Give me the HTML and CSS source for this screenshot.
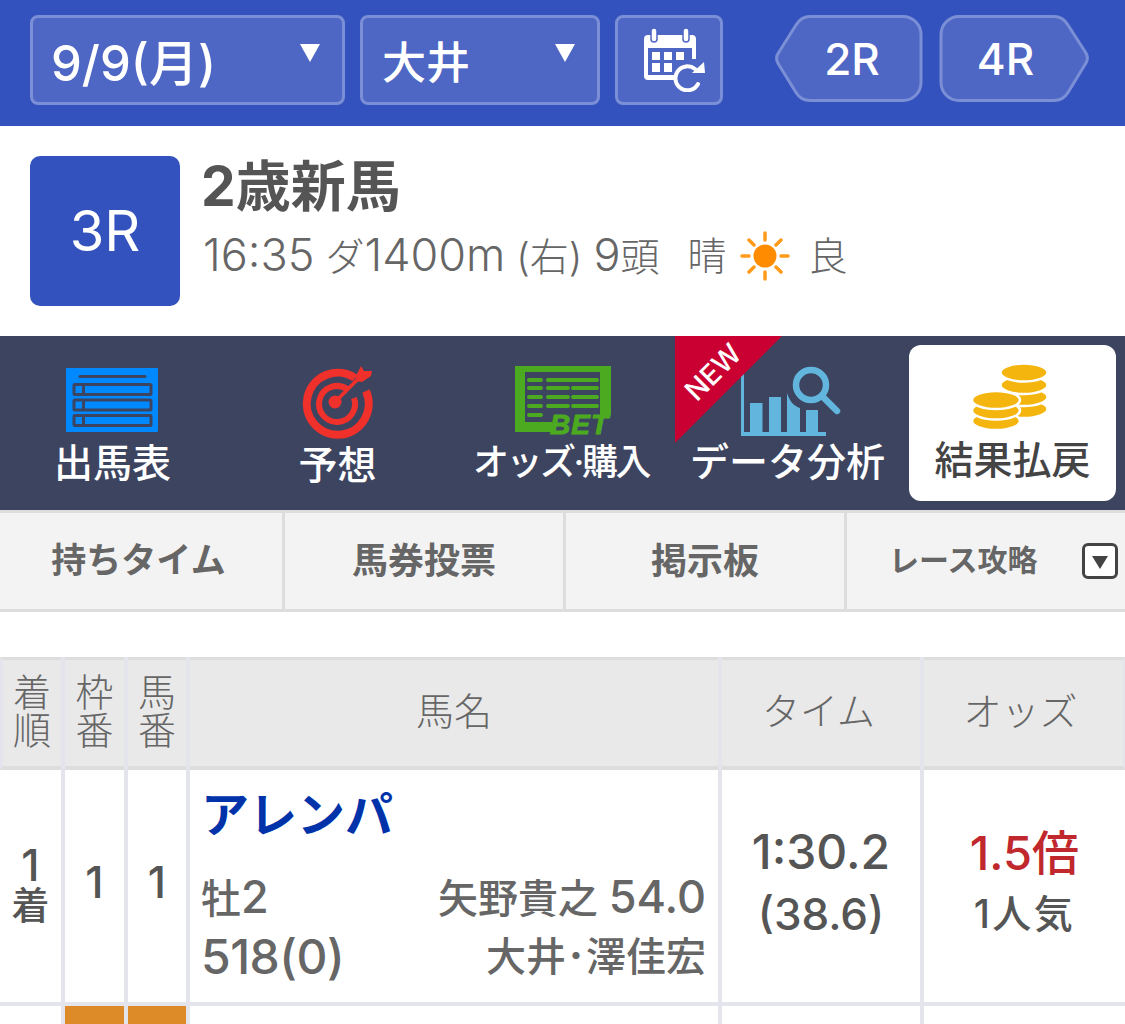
FILE: index.html
```html
<!DOCTYPE html>
<html lang="ja">
<head>
<meta charset="utf-8">
<title>3R 2歳新馬</title>
<link rel="stylesheet" href="styles.css">
</head>
<body>
<header class="topbar">
  <div class="box box-date"><span>9/9(月)</span><i class="caret"></i></div>
  <div class="box box-place"><span>大井</span><i class="caret"></i></div>
  <div class="box box-cal">
    <svg width="62" height="64" viewBox="0 0 62 64">
      <path fill="#fff" d="M4 7h44a4 4 0 0 1 4 4v20h-4V20H4v27h27v5H4a4 4 0 0 1-4-4V11a4 4 0 0 1 4-4z"/>
      <rect x="7" y="0" width="6" height="14" rx="3" fill="#fff" stroke="#4f67c4" stroke-width="1.500"/>
      <rect x="39" y="0" width="6" height="14" rx="3" fill="#fff" stroke="#4f67c4" stroke-width="1.500"/>
      <path fill="#fff" d="M8 24h8v8H8zM20 24h8v8h-8zM32 24h8v8h-8zM8 35h8v9H8zM20 35h8v9h-8z"/>
      <path fill="none" stroke="#fff" stroke-width="4" stroke-linecap="round" d="M51 41A12 12 0 1 0 54 56"/>
      <path fill="#fff" d="M48 45L60 34l1 11z"/>
    </svg>
  </div>
  <div class="pager">
    <div class="hex hex-prev">
      <svg class="hex-shape" width="148" height="87" viewBox="0 0 148 87"><path d="M35 1.500H128a18 18 0 0 1 18 18v48a18 18 0 0 1-18 18H35c-7 0-11-3-14-8L4 50c-3-4-3-9 0-13L21 10c3-5 7-8.500 14-8.500z" fill="#4f67c4" stroke="#7b8fd6" stroke-width="3"/></svg>
      <span class="hex-label">2R</span>
    </div>
    <div class="hex hex-next">
      <svg class="hex-shape" width="150" height="87" viewBox="0 0 150 87"><path d="M115 1.500H20A18 18 0 0 0 2 19.500v48a18 18 0 0 0 18 18h95c7 0 11-3 14-8l17-28c3-4 3-9 0-13L129 10c-3-5-7-8.500-14-8.500z" fill="#4f67c4" stroke="#7b8fd6" stroke-width="3"/></svg>
      <span class="hex-label">4R</span>
    </div>
  </div>
</header>

<section class="race">
  <div class="race-no">3R</div>
  <div class="race-text">
    <h1 class="race-name">2歳新馬</h1>
    <p class="race-meta">
      <span><span class="lat">16:35</span> ダ<span class="lat">1400m</span> (右) <span class="lat">9</span>頭</span>
      <span class="weather">晴</span>
      <svg class="sun" width="50" height="50" viewBox="0 0 50 50">
        <circle cx="25" cy="25" r="11.500" fill="#ff8c00"/>
        <g stroke="#ff9a1a" stroke-width="3.500" stroke-linecap="round">
          <path d="M25 2v7M25 41v7M2 25h7M41 25h7M9 9l5 5M36 36l5 5M41 9l-5 5M14 36l-5 5"/>
        </g>
      </svg>
      <span>良</span>
    </p>
  </div>
</section>

<nav class="tabs">
  <a class="tab tab-list">
    <svg class="ic" width="92" height="64" viewBox="0 0 92 64">
      <rect width="92" height="64" rx="1" fill="#0088ff"/>
      <rect x="12.500" y="7" width="68" height="3" rx="1.500" fill="#3d4460"/>
      <g fill="none" stroke="#3d4460" stroke-width="3">
        <rect x="8" y="16.500" width="77" height="10" rx="1"/>
        <rect x="8" y="32" width="77" height="10" rx="1"/>
        <rect x="8" y="47.500" width="77" height="10" rx="1"/>
      </g>
      <path fill="#3d4460" d="M16 16h3v11h-3zM16 32h3v10h-3zM16 47h3v11h-3z"/>
    </svg>
    <span>出馬表</span>
  </a>
  <a class="tab tab-target">
    <svg class="ic" width="72" height="72" viewBox="0 0 72 72">
      <g fill="none" stroke="#f0302b">
        <path stroke-width="8" d="M54 13a31 31 0 1 0 11 13"/>
        <path stroke-width="6" d="M46 24a18 18 0 1 0 7 9"/>
      </g>
      <circle cx="34" cy="37" r="6.500" fill="#f0302b"/>
      <path stroke="#f0302b" stroke-width="3.500" d="M34 37L60 11"/>
      <path fill="#f0302b" d="M55 11l5-10 3 5h8l-1 5-9 6-7-1z"/>
    </svg>
    <span>予想</span>
  </a>
  <a class="tab tab-bet">
    <svg class="ic" width="96" height="70" viewBox="0 0 96 70">
      <path fill="#4caa20" d="M0 0h96v49H85V6H10v50h27v10H0z"/>
      <path stroke="#4caa20" stroke-width="4" stroke-linecap="round" d="M14 14h12M33 14h49M14 22h12M33 22h20M58 22h24M14 31h12M33 31h20M58 31h24M14 40h12M33 40h20M58 40h24M14 49h12"/>
      <text class="bet" x="35" y="68">BET</text>
    </svg>
    <span class="tab-tight">オッズ·購入</span>
  </a>
  <a class="tab tab-data">
    <svg class="ic" width="100" height="69" viewBox="0 0 100 69">
      <path fill="#62b6de" d="M0 7h3v58h82v4H0zM9 36h12.500v29H9zM28 30h12v35H28zM46 26c3 9 7 13 13 15v24H46zM65 43h12v22H65z"/>
      <circle cx="70" cy="18" r="15" fill="none" stroke="#62b6de" stroke-width="6.500"/>
      <path stroke="#62b6de" stroke-width="6.500" stroke-linecap="round" d="M82 30l14 14"/>
    </svg>
    <span>データ分析</span>
    <span class="ribbon"><span class="ribbon-text">NEW</span></span>
  </a>
  <a class="tab tab-on">
    <svg class="ic" width="76" height="67" viewBox="0 0 76 67">
      <g fill="#f4b50e" stroke="#fff" stroke-width="2.500">
        <ellipse cx="52" cy="46" rx="23.500" ry="9"/>
        <ellipse cx="52" cy="34" rx="23.500" ry="9"/>
        <ellipse cx="52" cy="22" rx="23.500" ry="9"/>
        <ellipse cx="52" cy="9.500" rx="23.500" ry="9"/>
        <ellipse cx="24" cy="58" rx="24" ry="9"/>
        <ellipse cx="24" cy="47.500" rx="24" ry="9"/>
        <ellipse cx="24" cy="37" rx="24" ry="9"/>
      </g>
    </svg>
    <span>結果払戻</span>
  </a>
</nav>

<div class="subnav">
  <a class="sub sub-first">持ちタイム</a>
  <a class="sub sub-wide">馬券投票</a>
  <a class="sub sub-wide">掲示板</a>
  <a class="sub sub-last"><span class="sub-small">レース攻略</span><i class="drop"></i></a>
</div>

<div class="grid">
  <div class="th th-first">着<br>順</div>
  <div class="th">枠<br>番</div>
  <div class="th">馬<br>番</div>
  <div class="th">馬名</div>
  <div class="th th-time">タイム</div>
  <div class="th th-last">オッズ</div>

  <div class="td td-rank"><span class="rank-num">1</span><span>着</span></div>
  <div class="td td-num">1</div>
  <div class="td td-num">1</div>
  <div class="td td-horse">
    <a class="horse-name">アレンパ</a>
    <div class="horse-row"><span>牡<span class="lat-row">2</span></span><span>矢野貴之 <span class="lat-row">54.0</span></span></div>
    <div class="horse-row"><span class="lat-weight">518(0)</span><span>大井･澤佳宏</span></div>
  </div>
  <div class="td td-time"><div class="time">1:30.2</div><div class="last">(38.6)</div></div>
  <div class="td td-odds"><div class="odds">1.5倍</div><div class="pop">1人気</div></div>

  <div class="next"></div>
  <div class="next next-frame"></div>
  <div class="next next-frame"></div>
  <div class="next"></div>
  <div class="next"></div>
  <div class="next"></div>
</div>
</body>
</html>
```
FILE: styles.css
```css
* { box-sizing: border-box; }
html, body { margin: 0; padding: 0; }
body {
  width: 1125px;
  height: 1024px;
  overflow: hidden;
  background: #fff;
  font-family: Inter, "Noto Sans CJK JP", sans-serif;
  color: #555;
}
a { color: inherit; text-decoration: none; }

.topbar {
  height: 126px;
  background: #3352bd;
  display: flex;
  padding: 15px 36px 0 30px;
  align-items: flex-start;
}
.box {
  height: 90px;
  background: #4f67c4;
  border: 3px solid #7b8fd6;
  border-radius: 8px;
  color: #fff;
  font-size: 44px;
  font-weight: 500;
  display: flex;
  align-items: center;
  justify-content: space-between;
  line-height: 1;
}
.box-date { width: 315px; padding: 6px 22px 0 18px; margin-right: 15px; font-size: 49px; }
.box-place { width: 240px; padding: 6px 22px 0 19px; margin-right: 15px; }
.box-cal { width: 108px; justify-content: center; padding-left: 12px; }
.caret {
  width: 0; height: 0;
  border-left: 10px solid transparent;
  border-right: 10px solid transparent;
  border-top: 18px solid #fff;
  margin-bottom: 20px;
}
.pager { display: flex; gap: 16px; margin-left: auto; }
.hex { position: relative; height: 87px; }
.hex-prev { width: 148px; }
.hex-next { width: 150px; }
.hex-shape { display: block; }
.hex-label {
  position: absolute; inset: 0;
  display: flex; align-items: center; justify-content: center;
  color: #fff; font-size: 44px; line-height: 1; font-weight: 500;
}
.hex-prev .hex-label { padding-left: 6px; }
.hex-next .hex-label { padding-right: 17px; }

.race {
  height: 210px;
  display: flex;
  align-items: center;
  padding-left: 30px;
  gap: 23px;
}
.race-no {
  width: 150px; height: 150px;
  background: #3352bd;
  border-radius: 10px;
  color: #fff;
  font-size: 56px;
  display: flex; align-items: center; justify-content: center;
}
.race-text { margin-top: -27px; }
.race-name { margin: 0 0 11px -2px; font-size: 55px; line-height: 66px; font-weight: 700; color: #555; }
.race-meta { margin: 0; display: flex; align-items: center; font-size: 39px; line-height: 50px; color: #666; font-weight: 300; white-space: nowrap; }
.lat { font-size: 45px; }
.weather { margin-left: 28px; }
.sun { margin: 0 19px 0 13px; }

.tabs {
  height: 174px;
  background: #3d4460;
  display: flex;
  padding-right: 9px;
}
.tab {
  width: 225px;
  position: relative;
  display: flex;
  flex-direction: column;
  align-items: center;
  justify-content: flex-end;
  color: #fff;
  font-size: 39px;
  font-weight: 500;
  line-height: 52px;
  padding-bottom: 21px;
}
.ic { display: block; overflow: visible; }
.tab-list { padding-bottom: 21px; }
.tab-list .ic { margin: 0 2px 5px 0; }
.tab-target { padding-bottom: 19px; }
.tab-target .ic { margin: 0 2px 2px 0; }
.tab-bet { padding-bottom: 22px; }
.tab-data { padding-bottom: 22px; }
.tab-data .ic { margin-left: 6px; }
.tab-tight { font-size: 36px; letter-spacing: -2.500px; white-space: nowrap; margin-right: 3px; }
.bet { font: italic 700 28px "Liberation Sans", sans-serif; fill: #4caa20; stroke: #4caa20; stroke-width: 1px; letter-spacing: 1px; }
.tab-on {
  width: 207px;
  margin: 9px 0 9px 9px;
  background: #fff;
  border-radius: 12px;
  color: #444;
  padding-bottom: 15px;
}
.tab-on .ic { margin: 0 6px 4px 0; }
.ribbon {
  position: absolute;
  left: 0; top: 0;
  width: 107px; height: 107px;
  background: #c90031;
  clip-path: polygon(0 0, 100% 0, 0 100%);
}
.ribbon-text {
  position: absolute;
  left: -2px; top: 18px;
  width: 80px;
  text-align: center;
  color: #fff;
  font-size: 28px;
  line-height: 36px;
  font-weight: 500;
  transform: rotate(-45deg);
}

.subnav {
  height: 102px;
  display: grid;
  grid-template-columns: 282px 278px 278px 278px;
  column-gap: 3px;
  background: #ddd;
  border-top: 3px solid #ddd;
  border-bottom: 3px solid #ddd;
}
.sub {
  background: #f3f3f3;
  display: flex;
  align-items: center;
  justify-content: center;
  color: #666;
  font-size: 35px;
  font-weight: 700;
  padding-bottom: 7px;
}
.sub-first { padding-right: 5px; }
.sub-wide { font-size: 36px; }
.sub-last { justify-content: flex-start; padding-left: 42px; }
.sub-small { font-size: 30px; }
.drop {
  width: 36px; height: 36px;
  margin: 6px 0 0 44px;
  border: 3px solid #444;
  border-radius: 6px;
  background: #fff;
  position: relative;
}
.drop::after {
  content: "";
  position: absolute;
  left: 7px; top: 10px;
  border-left: 8px solid transparent;
  border-right: 8px solid transparent;
  border-top: 13px solid #444;
}

.grid {
  margin-top: 45px;
  display: grid;
  grid-template-columns: 61px 59px 58px 528px 198px 201px;
  grid-template-rows: 113px 236px 18px;
  column-gap: 4px;
  background: #e4e4ec;
}
.th {
  background: #e9e9e9;
  border-top: 3px solid #ddd;
  border-bottom: 4px solid #ddd;
  display: flex;
  align-items: center;
  justify-content: center;
  text-align: center;
  color: #666;
  font-size: 38px;
  line-height: 38px;
  font-weight: 300;
  padding-bottom: 5px;
}
.th-first { border-left: 3px solid #e4e4ec; padding-bottom: 4px; }
.th-time { padding-right: 5px; }
.th-last { border-right: 2px solid #e4e4ec; padding-right: 6px; }
.td {
  background: #fff;
  border-bottom: 4px solid #e4e4ec;
  display: flex;
  flex-direction: column;
  align-items: center;
  justify-content: center;
  text-align: center;
  color: #555;
}
.td-rank { font-size: 38px; line-height: 38px; font-weight: 500; padding-bottom: 3px; }
.rank-num { font-size: 44px; line-height: 41px; }
.td-num { font-size: 44px; padding-bottom: 8px; font-weight: 500; }
.td-horse { display: block; text-align: left; padding: 12px 12px 0 11px; }
.horse-name { display: block; color: #0033aa; font-size: 48px; line-height: 66px; font-weight: 700; margin-bottom: 20px; }
.horse-row { display: flex; justify-content: space-between; color: #666; font-size: 40px; line-height: 58px; font-weight: 500; }
.lat-row { font-size: 45px; }
.lat-weight { font-size: 48px; letter-spacing: -.500px; }
.time { font-size: 48px; line-height: 64px; font-weight: 500; }
.last { font-size: 44px; line-height: 60px; font-weight: 500; }
.td-time { padding-bottom: 8px; }
.td-odds { padding-bottom: 8px; }
.odds { font-size: 47px; line-height: 64px; color: #c0282d; font-weight: 500; }
.pop { font-size: 39px; line-height: 58px; font-weight: 500; letter-spacing: 2.500px; }
.next { background: #fff; }
.next-frame { background: #dd8a28; }
```
